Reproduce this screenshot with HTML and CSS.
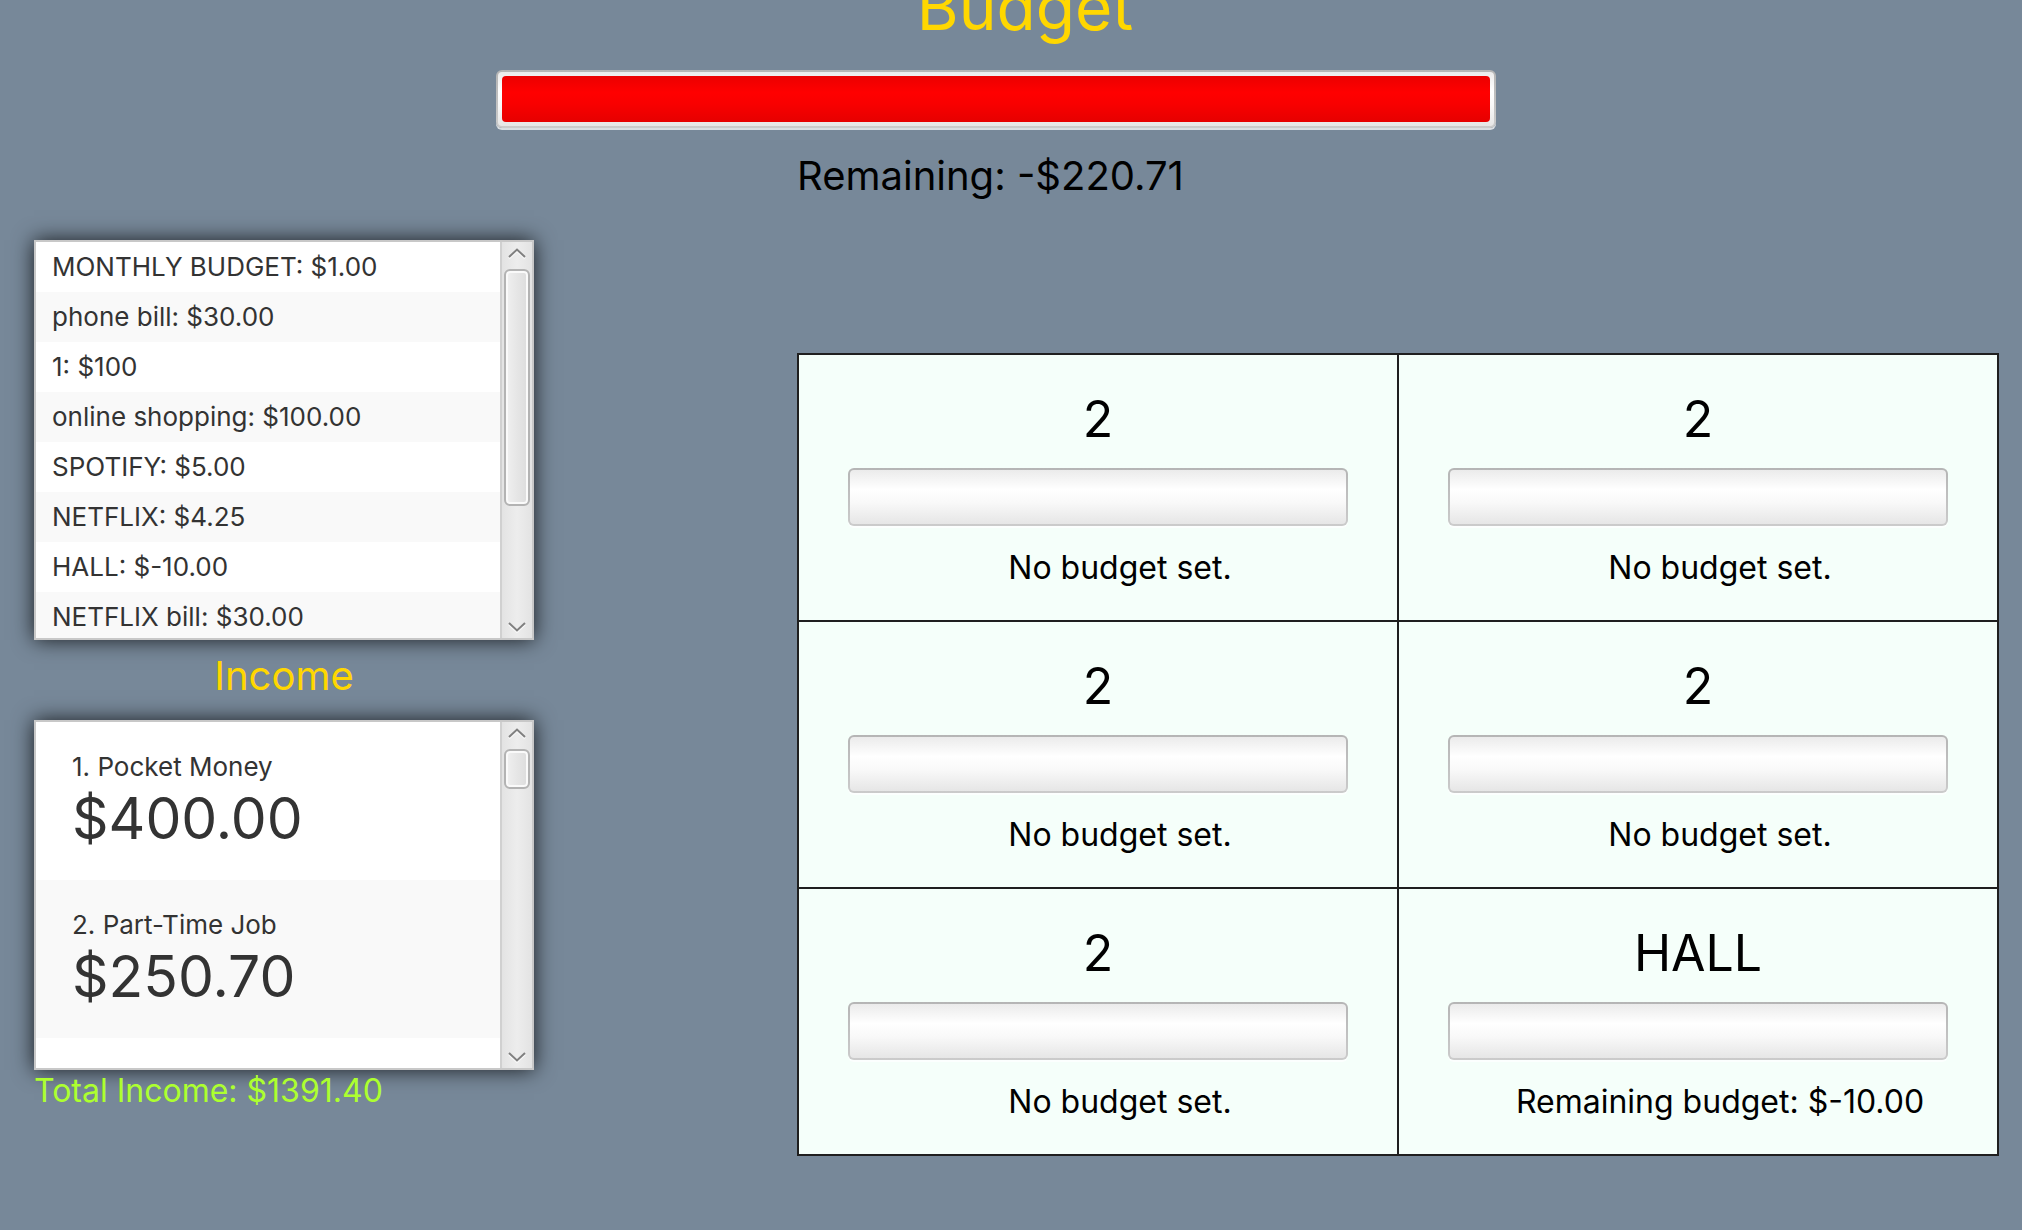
FILE: index.html
```html
<!DOCTYPE html>
<html lang="en">
<head>
<meta charset="utf-8">
<meta name="viewport" content="width=device-width, initial-scale=1">
<title>Budget</title>
<link rel="stylesheet" href="styles.css">
</head>
<body>
<header class="header">
  <h1 class="title" id="budget-title">Budget</h1>
  <progress class="meter meter-over" value="1" max="1" aria-labelledby="budget-title"></progress>
</header>
<main class="layout">
  <section class="sidebar">
    <div class="listbox listbox-expenses">
      <ul class="rows">
        <li class="row">MONTHLY BUDGET: $1.00</li>
        <li class="row">phone bill: $30.00</li>
        <li class="row">1: $100</li>
        <li class="row">online shopping: $100.00</li>
        <li class="row">SPOTIFY: $5.00</li>
        <li class="row">NETFLIX: $4.25</li>
        <li class="row">HALL: $-10.00</li>
        <li class="row">NETFLIX bill: $30.00</li>
      </ul>
      <div class="scrollbar">
        <button class="arrow" type="button" aria-label="Scroll up"><svg width="18" height="11" viewBox="0 0 18 11"><path class="arrow-glow" d="M1 10.5 9 3l8 7.500"/><path class="arrow-line" d="M1 9 9 1.500 17 9"/></svg></button>
        <div class="track"><div class="thumb" style="height: 69.300%"></div></div>
        <button class="arrow arrow-down" type="button" aria-label="Scroll down"><svg width="18" height="11" viewBox="0 0 18 11"><path class="arrow-glow" d="M1 2.500 9 10l8-7.500"/><path class="arrow-line" d="M1 1l8 7.500L17 1"/></svg></button>
      </div>
    </div>
    <h2 class="subtitle">Income</h2>
    <div class="listbox listbox-income">
      <ol class="rows">
        <li class="income"><span class="income-name">1. Pocket Money</span><span class="income-amount">$400.00</span></li>
        <li class="income"><span class="income-name">2. Part-Time Job</span><span class="income-amount">$250.70</span></li>
      </ol>
      <div class="scrollbar">
        <button class="arrow" type="button" aria-label="Scroll up"><svg width="18" height="11" viewBox="0 0 18 11"><path class="arrow-glow" d="M1 10.5 9 3l8 7.500"/><path class="arrow-line" d="M1 9 9 1.500 17 9"/></svg></button>
        <div class="track"><div class="thumb" style="height: 13.700%"></div></div>
        <button class="arrow arrow-down" type="button" aria-label="Scroll down"><svg width="18" height="11" viewBox="0 0 18 11"><path class="arrow-glow" d="M1 2.500 9 10l8-7.500"/><path class="arrow-line" d="M1 1l8 7.500L17 1"/></svg></button>
      </div>
    </div>
    <p class="total">Total Income: $1391.40</p>
  </section>
  <section class="overview">
    <p class="remaining">Remaining: -$220.71</p>
    <div class="cards">
      <article class="card"><h3 class="card-name" id="c1">2</h3><progress class="meter" value="0" max="1" aria-labelledby="c1"></progress><p class="card-note">No budget set.</p></article>
      <article class="card"><h3 class="card-name" id="c2">2</h3><progress class="meter" value="0" max="1" aria-labelledby="c2"></progress><p class="card-note">No budget set.</p></article>
      <article class="card"><h3 class="card-name" id="c3">2</h3><progress class="meter" value="0" max="1" aria-labelledby="c3"></progress><p class="card-note">No budget set.</p></article>
      <article class="card"><h3 class="card-name" id="c4">2</h3><progress class="meter" value="0" max="1" aria-labelledby="c4"></progress><p class="card-note">No budget set.</p></article>
      <article class="card"><h3 class="card-name" id="c5">2</h3><progress class="meter" value="0" max="1" aria-labelledby="c5"></progress><p class="card-note">No budget set.</p></article>
      <article class="card"><h3 class="card-name" id="c6">HALL</h3><progress class="meter" value="0" max="1" aria-labelledby="c6"></progress><p class="card-note">Remaining budget: $-10.00</p></article>
    </div>
  </section>
</main>
</body>
</html>
```
FILE: styles.css
```css
* {
  box-sizing: border-box;
}

body {
  margin: 0;
  background: #778899;
  color: #000;
  font-family: Inter, "Liberation Sans", sans-serif;
}

h1, h2, h3, p, ul, ol {
  margin: 0;
  padding: 0;
  font-weight: 400;
  list-style: none;
}

.header {
  display: flex;
  flex-direction: column;
  align-items: center;
  gap: 28px;
  padding-right: 30px;
}

.title {
  margin-top: -28px;
  padding-left: 58px;
  color: #ffd700;
  font-size: 64px;
  line-height: 70px;
}

/* Progress bars */
.meter {
  appearance: none;
  display: block;
  width: 100%;
  max-width: 1000px;
  height: 58px;
  padding: 4px;
  border: 2px solid transparent;
  border-radius: 6px;
  background:
    linear-gradient(#ebebeb, #fff 36%, #f9f9f9 60%, #e6e6e6) padding-box,
    linear-gradient(#b5b5b5, #cbcbcb) border-box;
  box-shadow: 0 2px 0 rgba(255, 255, 255, 0.73);
}

.meter::-webkit-progress-bar {
  background: transparent;
}

.meter::-webkit-progress-value {
  border-radius: 4px;
  background: linear-gradient(#eb0000, #f00 36%, #f90000 60%, #e60000);
}

.layout {
  display: grid;
  grid-template-columns: 500px minmax(0, 1fr);
  gap: 263px;
  align-items: start;
  padding: 24px 23px 60px 34px;
}

/* Lists */
.sidebar {
  padding-top: 88px;
}

.listbox {
  display: flex;
  border: 2px solid #c8c8c8;
  background: #fff;
  box-shadow: 0 0 20px rgba(0, 0, 0, 0.8);
}

.listbox-expenses {
  height: 400px;
}

.listbox-income {
  height: 350px;
}

.rows {
  flex: 1;
  overflow: hidden;
  color: #333;
  font-size: 26px;
}

.row {
  padding-left: 16px;
  line-height: 50px;
}

.row:nth-child(even),
.income:nth-child(even) {
  background: #f9f9f9;
}

.income {
  display: flex;
  flex-direction: column;
  padding: 28px 36px 26px;
}

.income-name {
  line-height: 34px;
}

.income-amount {
  font-size: 57px;
  line-height: 70px;
}

.subtitle {
  padding: 12px 0 20px;
  color: #ffd700;
  font-size: 40px;
  line-height: 48px;
  text-align: center;
}

.total {
  position: relative;
  color: #adff2f;
  font-size: 32px;
  line-height: 42px;
}

.scrollbar {
  display: flex;
  flex-direction: column;
  width: 32px;
  border-left: 2px solid #d0d0d0;
  background: linear-gradient(90deg, #e3e3e3, #ededed 50%, #e3e3e3);
}

.arrow {
  display: flex;
  justify-content: center;
  align-items: flex-start;
  height: 27px;
  padding: 6px 0;
  border: 0;
  background: none;
}

.arrow-down {
  align-items: flex-end;
  padding: 5px 0;
}

.arrow-line,
.arrow-glow {
  fill: none;
  stroke: #808080;
  stroke-width: 2;
}

.arrow-glow {
  stroke: #f8f8f8;
}

.track {
  flex: 1;
  padding: 0 2px;
}

.thumb {
  border: 2px solid #b3b3b3;
  border-radius: 6px;
  background: linear-gradient(90deg, #f0f0f0, #dcdcdc);
  box-shadow: inset 0 0 0 2px #fafafa;
}

/* Category cards */
.remaining {
  padding-bottom: 153px;
  font-size: 40px;
  line-height: 48px;
}

.cards {
  display: grid;
  grid-template-columns: repeat(2, minmax(0, 1fr));
  gap: 2px;
  padding: 2px;
  background: #1f1f1f;
}

.card {
  display: flex;
  flex-direction: column;
  align-items: center;
  gap: 20px;
  padding: 35px 49px 30px;
  background: #f5fffa;
}

.card-name {
  font-size: 50px;
  line-height: 58px;
}

.card-note {
  padding-left: 44px;
  font-size: 32px;
  line-height: 44px;
}
```
